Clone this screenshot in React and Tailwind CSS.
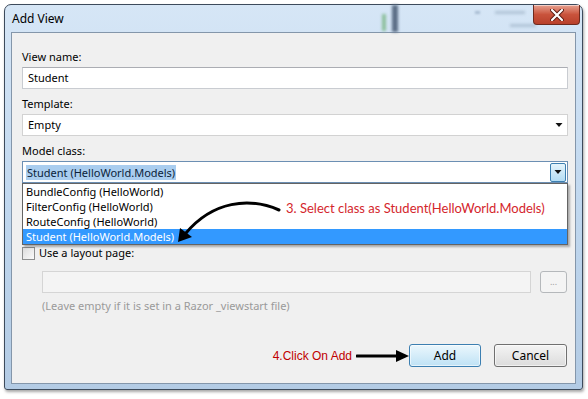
import React from 'react';

const ui = { fontFamily: '"Noto Sans", "Liberation Sans", sans-serif' };

function CloseButton() {
  return (
    <div className="absolute top-0 right-[2px] w-[47px] h-[20px] rounded-b-[4px] border border-t-0 border-[#6e2a1e] bg-gradient-to-b from-[#e7a08f] via-[#c9533c] to-[#b8402b] flex items-center justify-center shadow-[inset_0_1px_0_rgba(255,255,255,0.5)]">
      <svg width="14" height="12" viewBox="0 0 14 12">
        <path d="M2 1 L12 11 M12 1 L2 11" stroke="#5a1a10" strokeWidth="4" strokeLinecap="round" />
        <path d="M2 1 L12 11 M12 1 L2 11" stroke="#ffffff" strokeWidth="2.2" strokeLinecap="round" />
      </svg>
    </div>
  );
}

function Arrow({ className }) {
  return (
    <svg className={className} width="10" height="8" viewBox="0 0 10 8">
      <path d="M1.5 2 L8.5 2 L5 6 Z" fill="#111" />
    </svg>
  );
}

export default function App() {
  const items = ['BundleConfig (HelloWorld)', 'FilterConfig (HelloWorld)', 'RouteConfig (HelloWorld)'];

  return (
    <div className="w-[588px] h-[399px] bg-white overflow-hidden pt-[4px] pl-[4px]" style={ui}>
      {/* window frame */}
      <div className="relative w-[579px] h-[386px] rounded-t-[7px] rounded-b-[3px] border border-[#3d4b5c] bg-gradient-to-b from-[#d6e6f6] via-[#c1d8ef] to-[#b3cbe4] flex flex-col shadow-[1px_2px_3px_rgba(0,0,0,0.35)]">
        {/* title bar */}
        <div className="relative h-[27px] flex items-center pl-[7px] text-[12px] text-black">
          <div className="absolute left-[377px] top-[9px] w-[4px] h-[17px] bg-[#8cbf9c] blur-[1.5px]" />
          <div className="absolute left-[387px] top-[0px] w-[6px] h-[27px] bg-[#5b6e86] blur-[1.5px]" />
          <div className="absolute left-[470px] top-[6px] w-[5px] h-[3px] bg-[#a9bdd2] blur-[1px]" />
          <div className="absolute left-[490px] top-[6px] w-[30px] h-[3px] bg-[#b0c3d6] blur-[1.5px]" />
          <div className="absolute left-[505px] top-[19px] w-[26px] h-[3px] bg-[#b0c3d6] blur-[1.5px]" />
          <span>Add View</span>
          <CloseButton />
        </div>

        {/* client area */}
        <div className="mx-[6px] mb-[5px] flex-1 border border-[#8496aa] bg-[#f0f0f0] pl-[10px] pr-[7px] pt-[16px] flex flex-col text-[11px] text-black">
          <div className="h-[16px] leading-[16px]">View name:</div>
          <div className="mt-[2px] h-[22px] border border-[#c9ccd1] border-t-[#abadb3] bg-white flex items-center px-[5px]">Student</div>

          <div className="mt-[7px] h-[16px] leading-[16px]">Template:</div>
          <div className="mt-[2px] h-[22px] border border-[#d2d2d2] bg-white flex items-center pl-[5px] pr-[3px]">
            <span className="flex-1">Empty</span>
            <Arrow />
          </div>

          <div className="mt-[7px] h-[16px] leading-[16px]">Model class:</div>
          <div className="relative mt-[2px]">
            <div className="h-[22px] border border-[#6c8fb3] bg-white flex items-center pl-[3px] pr-[1px]">
              <span className="flex-1 flex">
                <span className="bg-[#a9cdef] text-[#0b1e3a] px-[1px] leading-[15px]">Student (HelloWorld.Models)</span>
              </span>
              <div className="w-[16px] h-[19px] border border-[#3c7fb1] rounded-[2px] bg-gradient-to-b from-[#e5f4fc] to-[#b3dcf3] flex items-center justify-center">
                <Arrow />
              </div>
            </div>

            {/* open dropdown list */}
            <div className="absolute left-0 right-0 top-[22px] border border-[#646464] bg-white shadow-[2px_2px_2px_rgba(0,0,0,0.3)] z-10">
              {items.map((item) => (
                <div key={item} className="h-[15px] leading-[15px] pl-[3px]">{item}</div>
              ))}
              <div className="h-[15px] leading-[15px] pl-[3px] bg-[#3399ff] text-white">Student (HelloWorld.Models)</div>

              {/* annotation 3 */}
              <div className="absolute left-[263px] top-[16px] text-[13px] leading-[16px] text-[#d4262c] whitespace-nowrap" style={{ fontFamily: 'Lato, "Noto Sans", sans-serif' }}>
                3. Select class as Student(HelloWorld.Models)
              </div>
              <svg className="absolute left-0 top-0" width="270" height="64" viewBox="0 0 270 64">
                <path d="M256 26 C226 13, 190 17, 163 49" fill="none" stroke="#000" strokeWidth="3" strokeLinecap="round" />
                <path d="M155 58 L157 44 L169 53 Z" fill="#000" />
              </svg>
            </div>
          </div>

          <div className="mt-[62px] h-[16px] flex items-center">
            <div className="w-[13px] h-[13px] border border-[#8e8f8f] bg-gradient-to-br from-[#dcdcdc] to-[#fbfbfb]" />
            <span className="ml-[4px]">Use a layout page:</span>
          </div>

          <div className="mt-[10px] ml-[20px] flex gap-[9px] pr-[1px]">
            <div className="flex-1 h-[22px] border border-[#d5d5d5] bg-[#f4f4f4]" />
            <div className="w-[27px] h-[22px] border border-[#b5b8bb] rounded-[3px] bg-[#f4f4f4] flex items-center justify-center text-[#a0a0a0] text-[9px]">...</div>
          </div>

          <div className="mt-[5px] ml-[20px] h-[16px] leading-[16px] text-[#9a9a9a]">(Leave empty if it is set in a Razor _viewstart file)</div>

          <div className="mt-[30px] flex items-center justify-end pr-[1px]">
            <span className="text-[12px] text-[#c00000]" style={{ fontFamily: '"Liberation Sans", Arial, sans-serif' }}>4.Click On Add</span>
            <svg className="ml-[4px]" width="53" height="14" viewBox="0 0 53 14">
              <path d="M1 7 L42 7" stroke="#000" strokeWidth="3" strokeLinecap="round" />
              <path d="M40 1 L53 7 L40 13 Z" fill="#000" />
            </svg>
            <button className="w-[72px] h-[23px] rounded-[3px] border border-[#3c7fb1] bg-gradient-to-b from-[#ebf7fd] to-[#bfe2f5] text-[12px] text-black shadow-[inset_0_0_0_1px_rgba(255,255,255,0.6)]">Add</button>
            <button className="ml-[13px] w-[73px] h-[23px] rounded-[3px] border border-[#707070] bg-gradient-to-b from-[#f4f4f4] to-[#dcdcdc] text-[12px] text-black shadow-[inset_0_0_0_1px_rgba(255,255,255,0.6)]">Cancel</button>
          </div>
        </div>
      </div>
    </div>
  );
}
